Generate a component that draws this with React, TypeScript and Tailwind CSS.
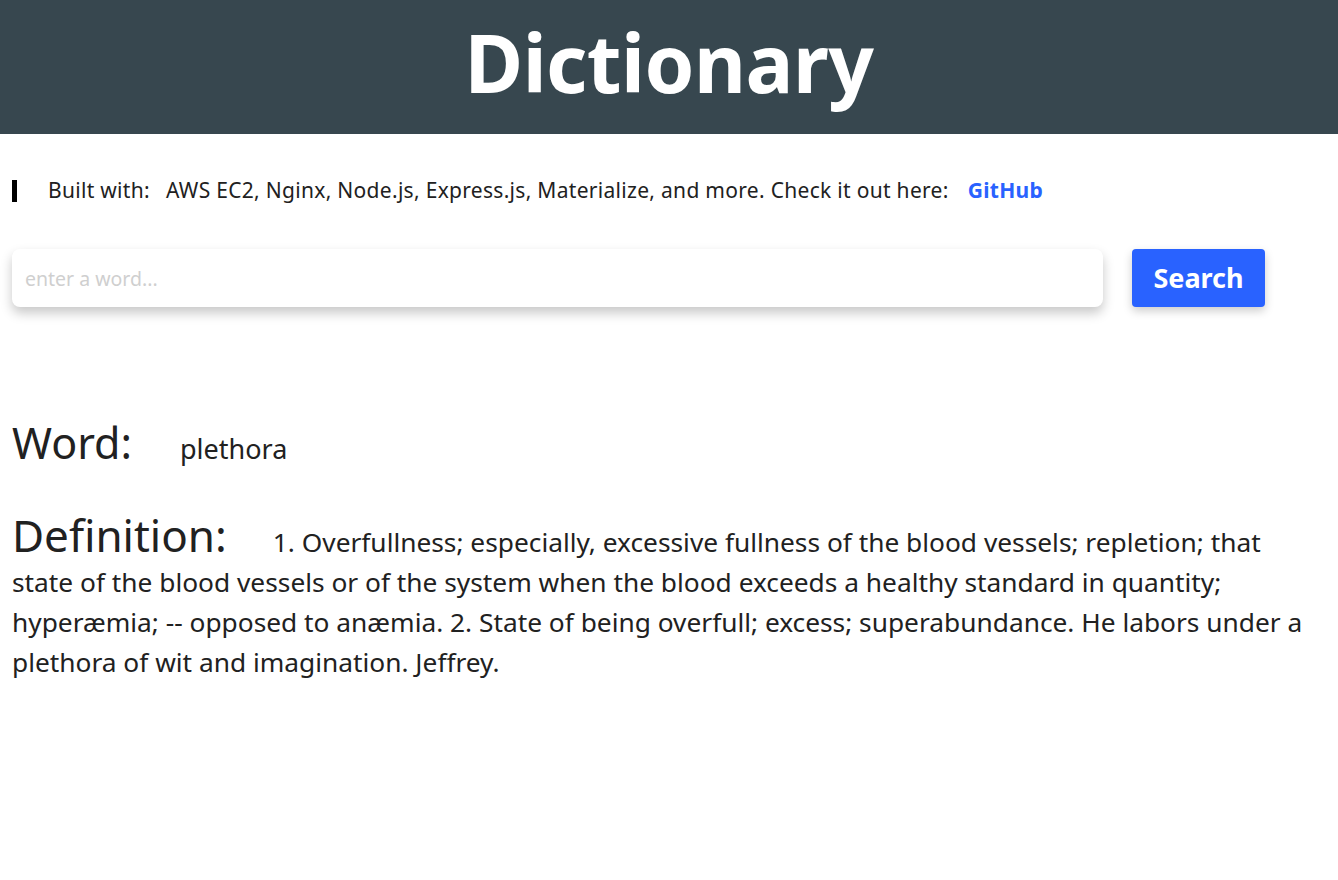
const App = () => {
    return (
        <div className="min-h-screen bg-white text-[#212121] font-['Noto_Sans',sans-serif]">
            <header className="flex items-center justify-center h-[134px] bg-[#37474f]">
                <h1 className="text-[80px] font-bold text-white leading-none pb-[10px] tracking-[-0.5px]">Dictionary</h1>
            </header>

            <div className="px-[12px]">
                <blockquote className="flex items-center mt-[46px] h-[22px] border-l-[5px] border-black pl-[31px] text-[21px] tracking-[0.3px]">
                    <span>Built with:</span>
                    <span className="ml-[16px]">AWS EC2, Nginx, Node.js, Express.js, Materialize, and more. Check it out here:</span>
                    <a href="#" className="ml-[19px] font-bold text-[#2962ff]">
                        GitHub
                    </a>
                </blockquote>

                <div className="flex items-center mt-[47px] gap-[29px]">
                    <input
                        type="text"
                        placeholder="enter a word..."
                        className="w-[1091px] h-[58px] rounded-[8px] bg-white px-[13px] text-[19.5px] placeholder:text-[#cfcfcf] outline-none shadow-[0_6px_12px_rgba(0,0,0,0.22)]"
                    />
                    <button
                        type="button"
                        className="w-[133px] h-[58px] rounded-[4px] bg-[#2962ff] text-white text-[27px] font-bold shadow-[0_4px_10px_rgba(0,0,0,0.2)]"
                    >
                        Search
                    </button>
                </div>

                <div className="flex items-baseline mt-[114px]">
                    <h2 className="text-[43px] leading-none">Word:</h2>
                    <span className="ml-[48px] text-[27px]">plethora</span>
                </div>

                <p className="mt-[45px] text-[26.3px] leading-[40px]">
                    <span className="text-[44px] leading-[40px] mr-[46px]">Definition:</span>
                    1. Overfullness; especially, excessive fullness of the blood vessels; repletion; that state of the blood vessels or of the system when the blood exceeds a healthy standard in quantity; hyperæmia; -- opposed to anæmia. 2. State of being overfull; excess; superabundance. He labors under a plethora of wit and imagination. Jeffrey.
                </p>
            </div>
        </div>
    );
};

export default App;
